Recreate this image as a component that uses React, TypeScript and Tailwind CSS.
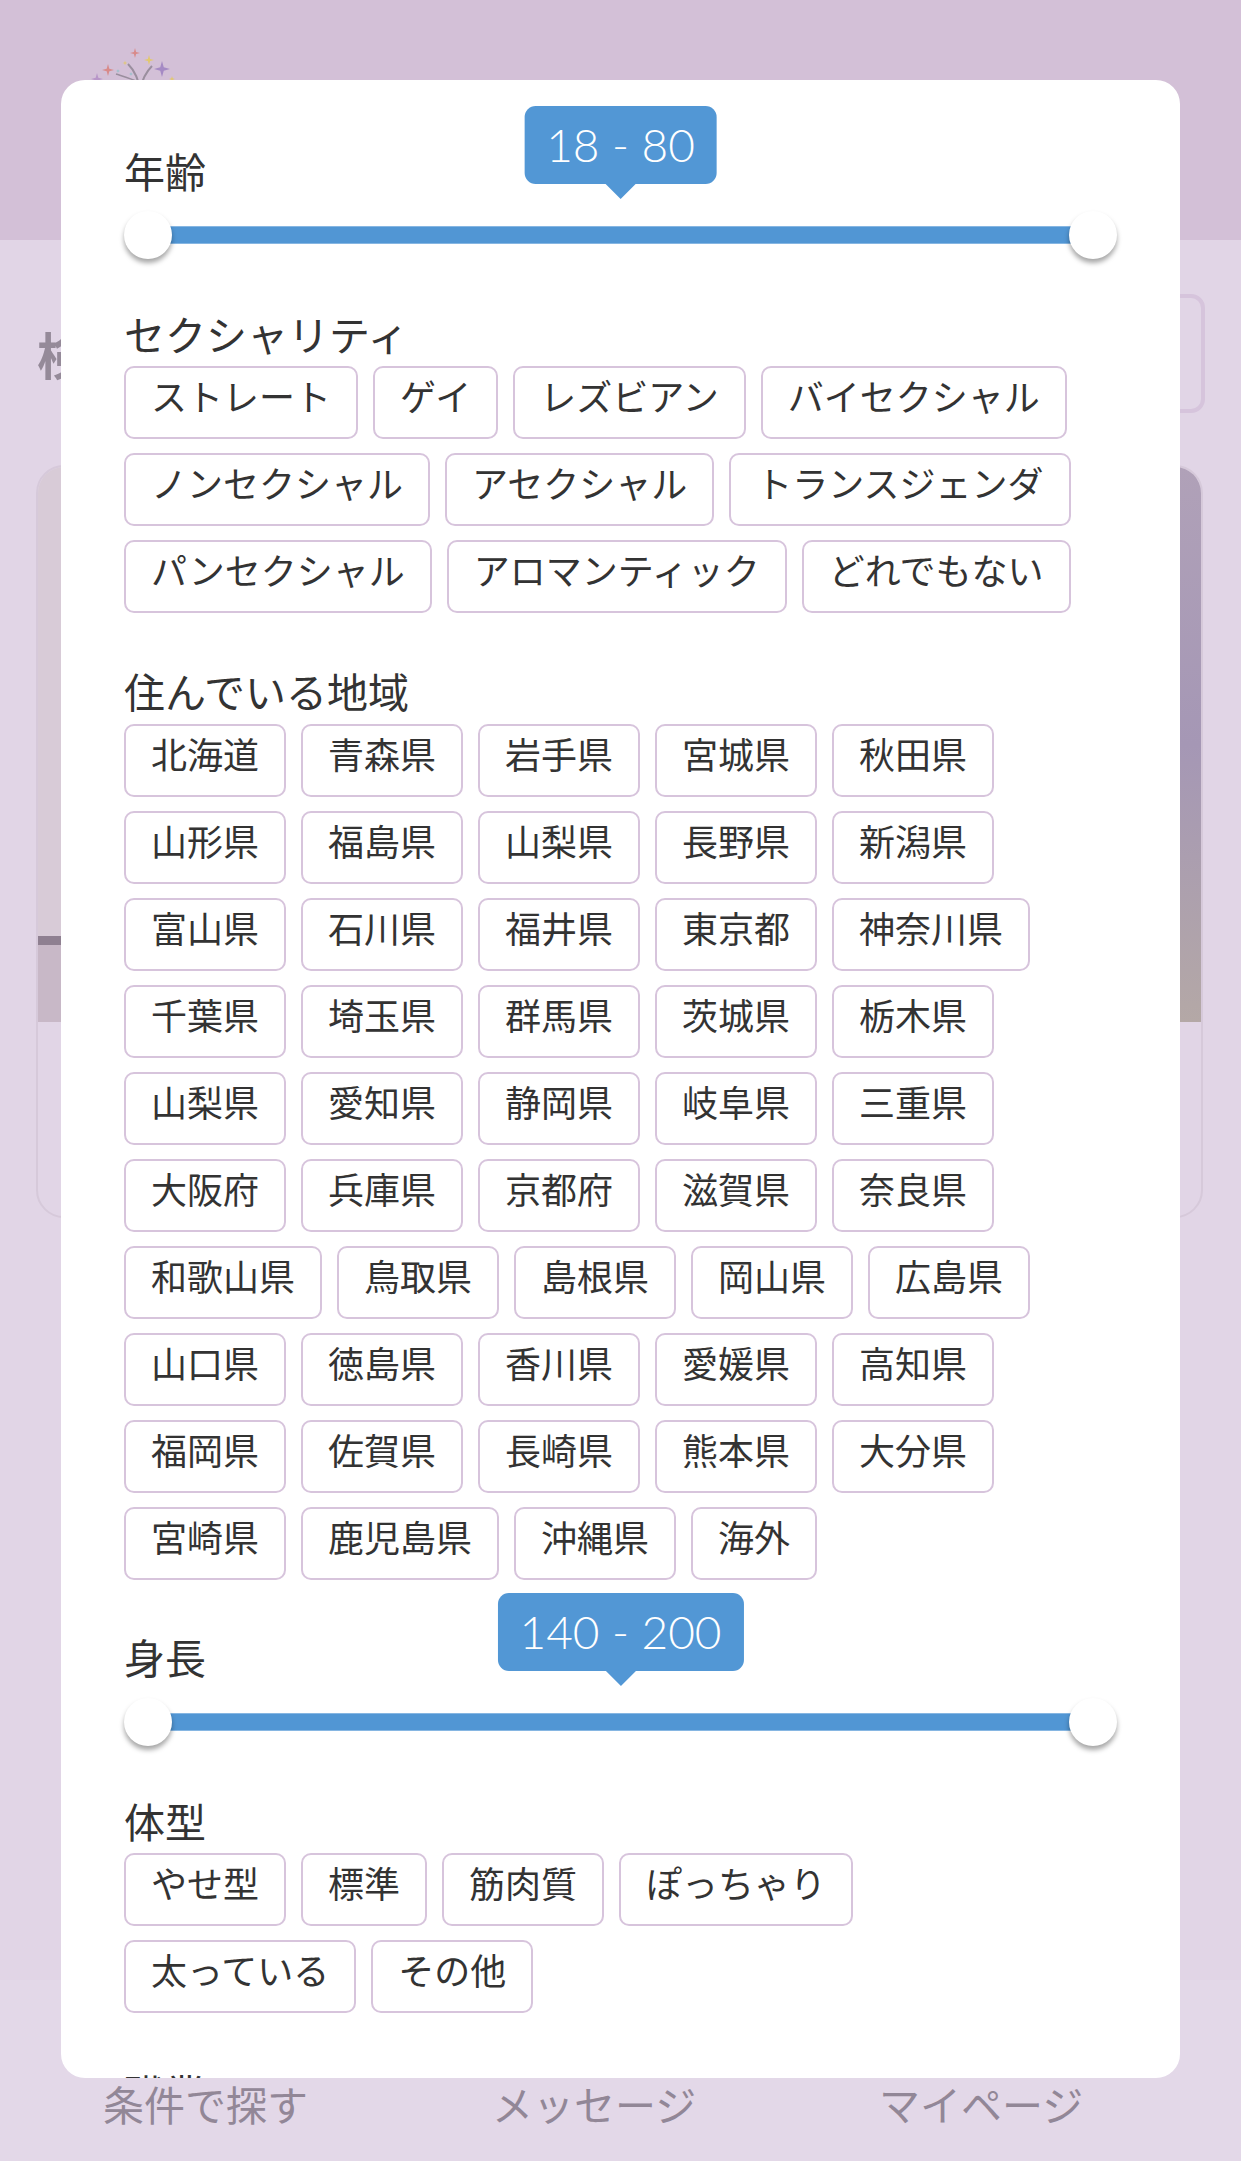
import React from "react";

const sexuality = [
  "ストレート",
  "ゲイ",
  "レズビアン",
  "バイセクシャル",
  "ノンセクシャル",
  "アセクシャル",
  "トランスジェンダ",
  "パンセクシャル",
  "アロマンティック",
  "どれでもない",
];

const prefectures = [
  "北海道", "青森県", "岩手県", "宮城県", "秋田県",
  "山形県", "福島県", "山梨県", "長野県", "新潟県",
  "富山県", "石川県", "福井県", "東京都", "神奈川県",
  "千葉県", "埼玉県", "群馬県", "茨城県", "栃木県",
  "山梨県", "愛知県", "静岡県", "岐阜県", "三重県",
  "大阪府", "兵庫県", "京都府", "滋賀県", "奈良県",
  "和歌山県", "鳥取県", "島根県", "岡山県", "広島県",
  "山口県", "徳島県", "香川県", "愛媛県", "高知県",
  "福岡県", "佐賀県", "長崎県", "熊本県", "大分県",
  "宮崎県", "鹿児島県", "沖縄県", "海外",
];

const bodyTypes = ["やせ型", "標準", "筋肉質", "ぽっちゃり", "太っている", "その他"];

function Label({ children, className = "" }: { children: React.ReactNode; className?: string }) {
  return <div className={"text-[41px] leading-[48px] text-[#333333] " + className}>{children}</div>;
}

function Chip({ children }: { children: React.ReactNode }) {
  return (
    <span className="inline-flex h-[73px] items-center rounded-[10px] border-2 border-[#d7c4dc] bg-white px-[25px] pb-[15px] text-[36px] leading-none text-[#333333]">
      {children}
    </span>
  );
}

function Chips({ items, className = "" }: { items: string[]; className?: string }) {
  return (
    <div className={"flex w-[975px] flex-wrap gap-x-[15px] gap-y-[14px] " + className}>
      {items.map((t, i) => (
        <Chip key={i}>{t}</Chip>
      ))}
    </div>
  );
}

function RangeSlider({ value, className = "" }: { value: string; className?: string }) {
  return (
    <div className={"relative h-[48px] " + className}>
      <div className="absolute left-[24px] right-[24px] top-[15px] h-[18px] border-y border-[#86b6e2] bg-[#5196d4]" />
      <div className="absolute left-0 top-0 h-[48px] w-[48px] rounded-full bg-white shadow-[0_4px_5px_rgba(0,0,0,0.35)]" />
      <div className="absolute right-0 top-0 h-[48px] w-[48px] rounded-full bg-white shadow-[0_4px_5px_rgba(0,0,0,0.35)]" />
      <div className="absolute left-1/2 top-[-105px] -translate-x-1/2">
        <div className="flex h-[78px] items-center whitespace-nowrap rounded-[11px] bg-[#5297d5] px-[22px] font-['Lato',sans-serif] text-[46px] font-light leading-none text-white">
          {value}
        </div>
        <div className="absolute left-1/2 top-full h-0 w-0 -translate-x-1/2 border-x-[15px] border-t-[15px] border-x-transparent border-t-[#5297d5]" />
      </div>
    </div>
  );
}

function Logo() {
  const star = (cx: number, cy: number, r: number, color: string) => {
    const s = r * 0.22;
    return (
      <path
        d={`M${cx} ${cy - r} L${cx + s} ${cy - s} L${cx + r} ${cy} L${cx + s} ${cy + s} L${cx} ${cy + r} L${cx - s} ${cy + s} L${cx - r} ${cy} L${cx - s} ${cy - s} Z`}
        fill={color}
      />
    );
  };
  return (
    <svg className="absolute left-[60px] top-[40px]" width="150" height="50" viewBox="60 40 150 50">
      <path d="M140 90 C 138 80, 136 72, 128 64" stroke="#9a8e9e" strokeWidth="2" fill="none" />
      <path d="M140 90 C 142 80, 146 72, 152 66" stroke="#9a8e9e" strokeWidth="2" fill="none" />
      <path d="M138 82 C 130 78, 122 76, 116 74" stroke="#9a8e9e" strokeWidth="1.5" fill="none" />
      {star(135, 53, 5, "#d88a8a")}
      {star(108, 70, 6, "#d88a8a")}
      {star(149, 60, 5, "#e2c86e")}
      {star(162, 69, 8, "#a58ac4")}
      {star(97, 79, 6, "#b896c8")}
      {star(125, 63, 2.5, "#e2c86e")}
      {star(118, 71, 2, "#8fc0c9")}
      {star(172, 79, 3, "#e2c86e")}
      {star(131, 74, 2, "#8fc0c9")}
    </svg>
  );
}

export default function App() {
  return (
    <div className="relative h-[2161px] w-[1241px] overflow-hidden bg-[#e1d5e6] font-['Noto_Sans_CJK_JP','Noto_Sans',sans-serif]">
      {/* Background page */}
      <div className="relative h-[240px] bg-[#d3c0d7]">
        <Logo />
      </div>
      <div className="flex items-start justify-between pl-[37px] pr-[36px] pt-[54px]">
        <div className="text-[50px] font-bold leading-[119px] text-[#958a99]">検索条件</div>
        <div className="h-[119px] w-[300px] rounded-[14px] border-4 border-[#d6c4dc]" />
      </div>
      <div className="mt-[52px] grid grid-cols-2 gap-[24px] pl-[36px] pr-[38px]">
        <div className="h-[753px] overflow-hidden rounded-[28px] border-2 border-[#d6c9da]">
          <div className="h-[469px] bg-[#d8cbd7]" />
          <div className="h-[9px] bg-[#8f8091]" />
          <div className="h-[77px] bg-[#c8b8c7]" />
        </div>
        <div className="h-[753px] overflow-hidden rounded-[28px] border-2 border-[#d6c9da]">
          <div className="h-[555px] bg-gradient-to-b from-[#b0a1b8] via-[#a597b5] to-[#b4a8a6]" />
        </div>
      </div>
      <div className="absolute bottom-0 left-0 h-[181px] w-full bg-[#e3d8e8]">
        <div className="flex pl-[103px] pt-[99px] text-[41px] leading-[48px] text-[#928797]">
          <div className="w-[389px]">条件で探す</div>
          <div className="w-[387px]">メッセージ</div>
          <div>マイページ</div>
        </div>
      </div>

      {/* Modal */}
      <div className="absolute left-[61px] top-[80px] h-[1998px] w-[1119px] overflow-hidden rounded-[24px] bg-white px-[63px] pt-[66px]">
        <Label>年齢</Label>
        <RangeSlider value="18 - 80" className="mt-[17px]" />

        <Label className="mt-[50px]">セクシャリティ</Label>
        <Chips items={sexuality} className="mt-[9px]" />

        <Label className="mt-[53px]">住んでいる地域</Label>
        <Chips items={prefectures} className="mt-[10px]" />

        <Label className="mt-[52px]">身長</Label>
        <RangeSlider value="140 - 200" className="mt-[18px]" />

        <Label className="mt-[50px]">体型</Label>
        <Chips items={bodyTypes} className="mt-[9px]" />

        <Label className="mt-[55px]">職業</Label>
      </div>
    </div>
  );
}
